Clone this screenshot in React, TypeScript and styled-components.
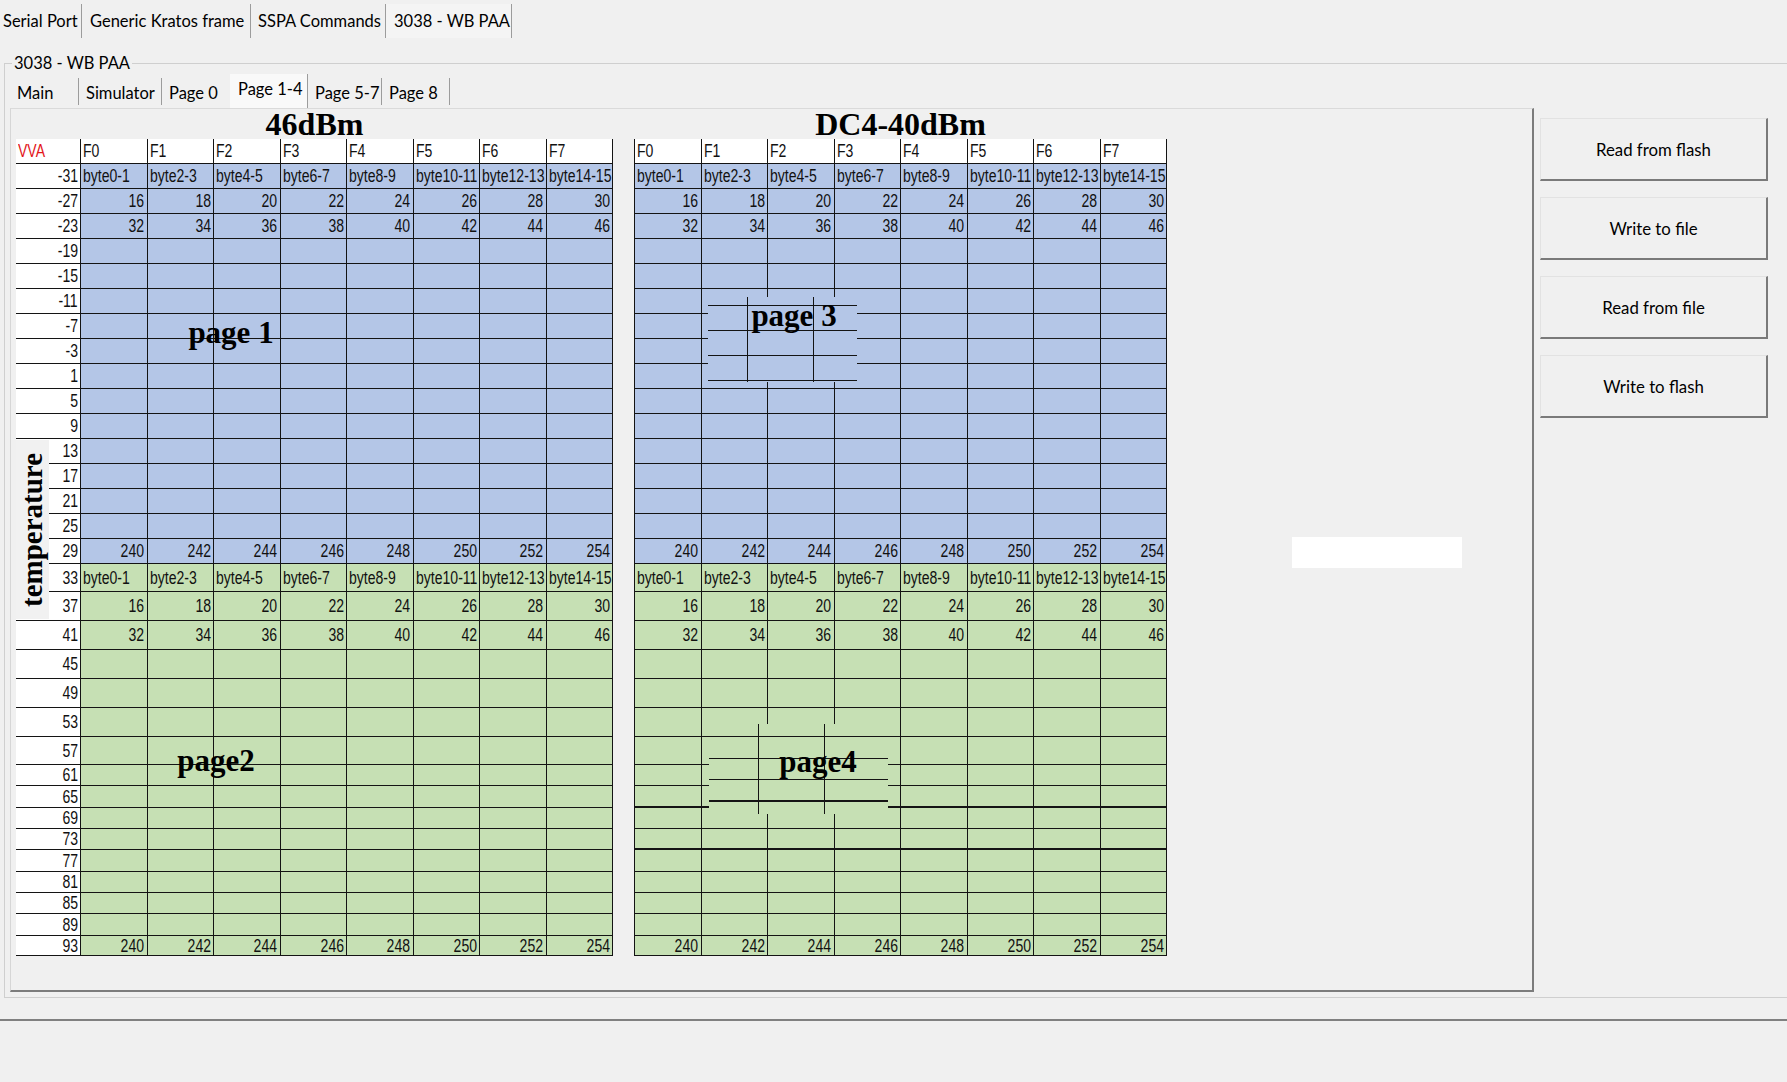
import React from 'react';
import styled, { createGlobalStyle } from 'styled-components';

const BLUE = '#b4c6e7';
const GREEN = '#c6e0b4';
const LINE = '#141414';
const UI_SIZE = '16.5px';

const GlobalStyle = createGlobalStyle`
  html, body { margin: 0; padding: 0; background: #f0f0f0; }
  body { font-family: Lato, "Open Sans", sans-serif; }
`;

const Window = styled.div`
  width: 1787px;
  height: 1082px;
  overflow: hidden;
  background: #f0f0f0;
  display: flex;
  flex-direction: column;
  color: #000;
  font-family: Lato, "Open Sans", sans-serif;
  font-size: ${UI_SIZE};
`;

/* ---------- top tab strip ---------- */
const TopTabBar = styled.div`
  display: flex;
  height: 38px;
  flex-shrink: 0;
`;

const TopTab = styled.div<{ $w: number; $pl: number; $active?: boolean }>`
  width: ${p => p.$w}px;
  box-sizing: border-box;
  margin-top: 4px;
  padding-left: ${p => p.$pl}px;
  display: flex;
  align-items: center;
  white-space: nowrap;
  border-right: 1px solid #9c9c9c;
  background: ${p => (p.$active ? '#f4f4f4' : 'transparent')};
`;

/* ---------- group box ---------- */
const GroupBox = styled.fieldset`
  margin: 14px 0 0 4px;
  padding: 0 0 5px 0;
  border: 1px solid #cfcfcf;
  border-right: none;
  min-width: 0;
  flex-shrink: 0;
`;

const GroupTitle = styled.legend`
  margin-left: 7px;
  padding: 0 2px;
  line-height: 22px;
  font-size: ${UI_SIZE};
`;

const InnerTabBar = styled.div`
  display: flex;
  height: 34px;
  padding-left: 5px;
`;

const InnerTab = styled.div<{ $w: number; $active?: boolean; $sep?: boolean }>`
  width: ${p => p.$w}px;
  box-sizing: border-box;
  margin-top: ${p => (p.$active ? 0 : 4)}px;
  height: ${p => (p.$active ? 34 : 27)}px;
  padding: ${p => (p.$active ? '0 0 4px 8px' : '2px 0 0 7px')};
  display: flex;
  align-items: center;
  white-space: nowrap;
  border-right: 1px solid ${p => (p.$sep ? '#9c9c9c' : 'transparent')};
  background: ${p => (p.$active ? '#f9f9f9' : 'transparent')};
`;

const GroupBody = styled.div`
  display: flex;
  align-items: flex-start;
  padding-left: 5px;
`;

const TabPanel = styled.div`
  width: 1524px;
  height: 884px;
  box-sizing: border-box;
  border-top: 1px solid #dadada;
  border-left: 1px solid #d6d6d6;
  border-right: 2px solid #7c7c7c;
  border-bottom: 2px solid #7c7c7c;
  padding-left: 5px;
  display: flex;
  align-items: flex-start;
  gap: 21px;
`;

const ButtonColumn = styled.div`
  margin-left: 6px;
  padding-top: 10px;
  width: 228px;
  display: flex;
  flex-direction: column;
  gap: 16px;
`;

const PanelButton = styled.button`
  height: 63px;
  box-sizing: border-box;
  background: #f0f0f0;
  border-top: 1px solid #e2e2e2;
  border-left: 1px solid #e2e2e2;
  border-right: 2px solid #7a7a7a;
  border-bottom: 2px solid #7a7a7a;
  font-family: Lato, "Open Sans", sans-serif;
  font-size: 16.8px;
  color: #000;
  padding: 0;
`;

const WhiteField = styled.div`
  margin-left: 104px;
  margin-top: 428px;
  width: 170px;
  height: 31px;
  background: #fff;
`;

const StatusBar = styled.div`
  margin-top: 21px;
  border-top: 2px solid #808080;
  flex: 1;
`;

/* ---------- spreadsheet ---------- */
const Sheet = styled.div`
  position: relative;
  display: flex;
  flex-direction: column;
`;

const SheetTitle = styled.div`
  height: 30px;
  line-height: 30px;
  text-align: center;
  font-family: "Liberation Serif", "Times New Roman", serif;
  font-weight: bold;
  font-size: 32px;
`;

const Table = styled.div<{ $leftBorder?: boolean }>`
  display: flex;
  flex-direction: column;
  border-left: ${p => (p.$leftBorder ? `1px solid ${LINE}` : 'none')};
`;

const Row = styled.div<{ $cols: string; $h: number; $thick?: boolean }>`
  display: grid;
  grid-template-columns: ${p => p.$cols};
  height: ${p => p.$h}px;
  box-sizing: border-box;
  border-bottom: ${p => (p.$thick ? 2 : 1)}px solid ${LINE};
`;

const Cell = styled.div<{ $bg: string; $right?: boolean }>`
  background: ${p => p.$bg};
  border-right: 1px solid ${LINE};
  display: flex;
  align-items: center;
  justify-content: ${p => (p.$right ? 'flex-end' : 'flex-start')};
  padding: 0 2px;
  min-width: 0;
  overflow: visible;
  white-space: nowrap;
`;

const CellText = styled.span<{ $right?: boolean; $red?: boolean }>`
  display: inline-block;
  font-family: "Liberation Sans", Arial, sans-serif;
  font-size: 18px;
  line-height: 1;
  color: ${p => (p.$red ? '#e3161a' : '#111')};
  transform: scaleX(0.78);
  transform-origin: ${p => (p.$right ? 'right' : 'left')} center;
`;

const PageLabel = styled.div<{ $x: number; $y: number }>`
  position: absolute;
  left: ${p => p.$x}px;
  top: ${p => p.$y}px;
  transform: translate(-50%, -50%);
  font-family: "Liberation Serif", "Times New Roman", serif;
  font-weight: bold;
  font-size: 31px;
  white-space: nowrap;
  line-height: 1;
`;

const AxisLabel = styled.div`
  position: absolute;
  left: 0;
  top: 331px;
  width: 33px;
  height: 179px;
  background: #f1f1f1;
  writing-mode: vertical-rl;
  transform: rotate(180deg);
  display: flex;
  align-items: center;
  justify-content: center;
  font-family: "Liberation Serif", "Times New Roman", serif;
  font-weight: bold;
  font-size: 29px;
  line-height: 33px;
`;

const PastedBox = styled.div<{
  $x: number; $y: number; $w: number; $h: number; $bg: string;
  $rowStep: number; $rowOff: number; $colOff: number;
}>`
  position: absolute;
  left: ${p => p.$x}px;
  top: ${p => p.$y}px;
  width: ${p => p.$w}px;
  height: ${p => p.$h}px;
  background-color: ${p => p.$bg};
  background-image:
    repeating-linear-gradient(to bottom, transparent 0 ${p => p.$rowOff}px, ${LINE} ${p => p.$rowOff}px ${p => p.$rowOff + 1.3}px, transparent ${p => p.$rowOff + 1.3}px ${p => p.$rowStep}px),
    repeating-linear-gradient(to right, transparent 0 ${p => p.$colOff}px, ${LINE} ${p => p.$colOff}px ${p => p.$colOff + 1}px, transparent ${p => p.$colOff + 1}px 66px);
`;

const BoxText = styled.div<{ $x: number; $y: number }>`
  position: absolute;
  left: ${p => p.$x}px;
  top: ${p => p.$y}px;
  transform: translate(-50%, -50%);
  font-family: "Liberation Serif", "Times New Roman", serif;
  font-weight: bold;
  font-size: 31px;
  line-height: 1;
  white-space: nowrap;
`;

/* ---------- data ---------- */
const COLS = [0, 1, 2, 3, 4, 5, 6, 7];
const TALL = [28, 29, 29, 29, 29, 29, 28];
const SHORT = [21, 22, 21, 21, 22, 21, 21, 22, 20];

type RowSpec = { h: number; bg: string; kind: 'bytes' | 'a' | 'b' | 'end' | 'empty' };

function buildRows(): RowSpec[] {
  const rows: RowSpec[] = [];
  const kindOf = (i: number): RowSpec['kind'] =>
    i === 0 ? 'bytes' : i === 1 ? 'a' : i === 2 ? 'b' : i === 15 ? 'end' : 'empty';
  for (let i = 0; i < 16; i++) rows.push({ h: 25, bg: BLUE, kind: kindOf(i) });
  const greenHeights = [...TALL, ...SHORT];
  for (let i = 0; i < 16; i++) rows.push({ h: greenHeights[i], bg: GREEN, kind: kindOf(i) });
  return rows;
}

const ROWS = buildRows();

function cellContent(kind: RowSpec['kind'], c: number): { text: string; right: boolean } {
  switch (kind) {
    case 'bytes':
      return { text: `byte${c * 2}-${c * 2 + 1}`, right: false };
    case 'a':
      return { text: String(16 + c * 2), right: true };
    case 'b':
      return { text: String(32 + c * 2), right: true };
    case 'end':
      return { text: String(240 + c * 2), right: true };
    default:
      return { text: '', right: true };
  }
}

const LEFT_COLS = '65px repeat(8, 66.5px)';
const RIGHT_COLS = 'repeat(8, 66.5px)';

const DataTable: React.FC<{ withLabels: boolean }> = ({ withLabels }) => {
  const cols = withLabels ? LEFT_COLS : RIGHT_COLS;
  return (
    <Table $leftBorder={!withLabels}>
      <Row $cols={cols} $h={25}>
        {withLabels && (
          <Cell $bg="#fff">
            <CellText $red>VVA</CellText>
          </Cell>
        )}
        {COLS.map(c => (
          <Cell key={c} $bg="#fff">
            <CellText>F{c}</CellText>
          </Cell>
        ))}
      </Row>
      {ROWS.map((r, i) => {
        const thick = !withLabels && (i === 24 || i === 26);
        return (
          <Row key={i} $cols={cols} $h={r.h} $thick={thick}>
            {withLabels && (
              <Cell $bg="#fff" $right>
                <CellText $right>{-31 + i * 4}</CellText>
              </Cell>
            )}
            {COLS.map(c => {
              const { text, right } = cellContent(r.kind, c);
              return (
                <Cell key={c} $bg={r.bg} $right={right}>
                  {text && <CellText $right={right}>{text}</CellText>}
                </Cell>
              );
            })}
          </Row>
        );
      })}
    </Table>
  );
};

const TOP_TABS = [
  { label: 'Serial Port', w: 82, pl: 3 },
  { label: 'Generic Kratos frame', w: 169, pl: 8 },
  { label: 'SSPA Commands', w: 135, pl: 7 },
  { label: '3038 - WB PAA', w: 126, pl: 8, active: true },
];

const INNER_TABS = [
  { label: 'Main', w: 69, sep: true },
  { label: 'Simulator', w: 83, sep: true },
  { label: 'Page 0', w: 68, sep: false },
  { label: 'Page 1-4', w: 78, sep: true, active: true },
  { label: 'Page 5-7', w: 74, sep: true },
  { label: 'Page 8', w: 68, sep: true },
];

const BUTTONS = ['Read from flash', 'Write to file', 'Read from file', 'Write to flash'];

export default function App() {
  return (
    <>
      <GlobalStyle />
      <Window>
        <TopTabBar>
          {TOP_TABS.map(t => (
            <TopTab key={t.label} $w={t.w} $pl={t.pl} $active={t.active}>
              {t.label}
            </TopTab>
          ))}
        </TopTabBar>

        <GroupBox>
          <GroupTitle>3038 - WB PAA</GroupTitle>
          <InnerTabBar>
            {INNER_TABS.map(t => (
              <InnerTab key={t.label} $w={t.w} $sep={t.sep} $active={t.active}>
                {t.label}
              </InnerTab>
            ))}
          </InnerTabBar>

          <GroupBody>
            <TabPanel>
              <Sheet>
                <SheetTitle>46dBm</SheetTitle>
                <DataTable withLabels />
                <PageLabel $x={215} $y={223}>page 1</PageLabel>
                <PageLabel $x={200} $y={651}>page2</PageLabel>
                <AxisLabel>temperature</AxisLabel>
              </Sheet>
              <Sheet>
                <SheetTitle>DC4-40dBm</SheetTitle>
                <DataTable withLabels={false} />
                <PastedBox $x={74} $y={188} $w={149} $h={85} $bg={BLUE} $rowStep={25} $rowOff={8} $colOff={39}>
                  <BoxText $x={86} $y={18}>page 3</BoxText>
                </PastedBox>
                <PastedBox $x={75} $y={615} $w={179} $h={90} $bg={GREEN} $rowStep={21.5} $rowOff={12} $colOff={49}>
                  <BoxText $x={109} $y={37}>page4</BoxText>
                </PastedBox>
              </Sheet>
              <WhiteField />
            </TabPanel>

            <ButtonColumn>
              {BUTTONS.map(b => (
                <PanelButton key={b}>{b}</PanelButton>
              ))}
            </ButtonColumn>
          </GroupBody>
        </GroupBox>

        <StatusBar />
      </Window>
    </>
  );
}
